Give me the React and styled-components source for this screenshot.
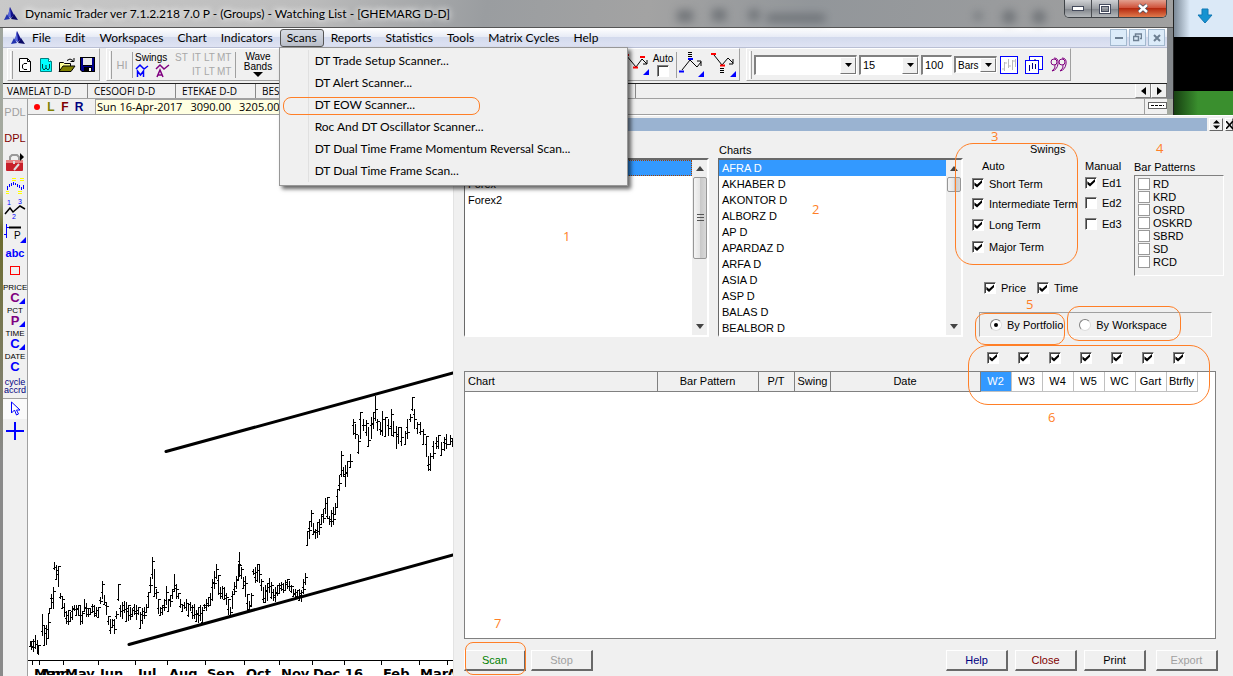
import React, { Component } from 'react';
import styled, { createGlobalStyle } from 'styled-components'

const ui = '"Open Sans", "Noto Sans", sans-serif'
const menuFont = 'Lato, "Open Sans", sans-serif'
const small = '"Liberation Sans", Arial, sans-serif'
const orange = '#ff7f27'

const menus = ['File', 'Edit', 'Workspaces', 'Chart', 'Indicators', 'Scans', 'Reports', 'Statistics', 'Tools', 'Matrix Cycles', 'Help']
const scanItems = [
    'DT Trade Setup Scanner...',
    'DT Alert Scanner...',
    'DT EOW Scanner...',
    'Roc And DT Oscillator Scanner...',
    'DT Dual Time Frame Momentum Reversal Scan...',
    'DT Dual Time Frame Scan...'
]
const symbols = ['AFRA D', 'AKHABER D', 'AKONTOR D', 'ALBORZ D', 'AP D', 'APARDAZ D', 'ARFA D', 'ASIA D', 'ASP D', 'BALAS D', 'BEALBOR D']
const patterns = ['RD', 'KRD', 'OSRD', 'OSKRD', 'SBRD', 'SD', 'RCD']
const waves = ['W2', 'W3', 'W4', 'W5', 'WC', 'Gart', 'Btrfly']
const columns = ['Chart', 'Bar Pattern', 'P/T', 'Swing', 'Date']

// x, high, low
const bars = [
    [30, 642, 647], [31, 642, 651], [33, 640, 653], [35, 636, 650], [37, 641, 655], [38, 646, 656], [42, 615, 637], [44, 626, 646], [46, 626, 646], [48, 614, 640], [49, 609, 615],
    [51, 595, 610], [53, 588, 610], [54, 563, 571], [56, 566, 580], [58, 567, 588], [60, 594, 600], [62, 598, 610], [64, 604, 618], [66, 612, 625],
    [68, 611, 626], [70, 613, 622], [72, 607, 621], [74, 606, 612], [76, 606, 617], [78, 606, 617], [80, 606, 626], [82, 612, 625], [84, 600, 612],
    [86, 604, 618], [88, 609, 618], [90, 610, 616], [92, 605, 614], [94, 606, 618], [96, 608, 618], [98, 608, 618], [100, 598, 605], [102, 582, 600],
    [104, 596, 606], [106, 603, 616], [108, 617, 626], [110, 620, 635], [112, 620, 628], [114, 620, 635], [116, 612, 620], [118, 585, 602],
    [120, 606, 618], [122, 603, 620], [124, 602, 614], [126, 603, 622], [128, 606, 622], [130, 608, 621], [132, 609, 618], [134, 605, 616],
    [136, 606, 621], [138, 608, 616], [140, 613, 629], [142, 609, 625], [144, 608, 620], [146, 605, 614], [148, 593, 608], [150, 578, 594],
    [152, 558, 580], [154, 570, 597], [156, 590, 600], [158, 600, 615], [160, 608, 617], [162, 606, 616], [164, 600, 612], [166, 587, 606],
    [168, 600, 612], [170, 596, 608], [172, 590, 600], [174, 575, 592], [176, 585, 600], [178, 594, 600], [180, 600, 609], [182, 605, 612],
    [184, 603, 610], [186, 600, 612], [188, 605, 618], [190, 603, 612], [192, 606, 620], [194, 605, 620], [196, 611, 622], [198, 608, 624],
    [200, 606, 622], [202, 608, 625], [204, 605, 610], [206, 600, 612], [208, 598, 608], [210, 594, 606], [212, 580, 602], [214, 572, 590],
    [216, 565, 580], [218, 576, 596], [220, 588, 600], [222, 587, 600], [224, 588, 600], [226, 594, 606], [228, 600, 616], [230, 608, 617],
    [232, 592, 610], [234, 583, 596], [236, 577, 590], [238, 565, 580], [239, 553, 578], [241, 568, 580], [243, 578, 590], [245, 577, 598],
    [247, 595, 612], [249, 602, 612], [251, 594, 606], [253, 570, 576], [255, 568, 584], [257, 565, 583], [259, 566, 584], [261, 580, 592],
    [263, 588, 604], [265, 586, 603], [267, 584, 602], [269, 579, 594], [271, 583, 600], [273, 590, 602], [275, 588, 603], [277, 586, 597],
    [279, 584, 594], [281, 583, 592], [283, 584, 594], [285, 581, 592], [287, 580, 590], [289, 582, 592], [291, 586, 594], [293, 590, 597],
    [295, 590, 600], [297, 591, 600], [299, 590, 602], [301, 591, 603], [303, 580, 595], [305, 574, 586],
    [307, 532, 546], [309, 522, 540], [311, 511, 528], [313, 524, 536], [315, 530, 540], [317, 523, 539], [319, 520, 536], [321, 515, 525],
    [323, 510, 524], [325, 499, 515], [327, 498, 520], [329, 517, 526], [331, 511, 528], [333, 508, 526], [335, 504, 515], [337, 490, 508],
    [339, 476, 492], [341, 452, 478], [343, 468, 478], [345, 466, 488], [347, 462, 478], [350, 455, 468], [353, 420, 436], [355, 425, 440],
    [358, 436, 455], [360, 413, 440], [363, 420, 432], [366, 421, 437], [368, 428, 447], [371, 418, 440], [373, 413, 430], [375, 397, 422],
    [377, 420, 432], [380, 423, 436], [382, 412, 437], [385, 418, 437], [388, 420, 437], [391, 410, 437], [393, 422, 438], [396, 427, 450],
    [398, 428, 445], [401, 428, 447], [405, 432, 445], [407, 420, 440], [410, 415, 423], [412, 398, 412], [414, 410, 430], [417, 423, 435],
    [420, 423, 436], [423, 430, 445], [426, 437, 458], [428, 457, 472], [430, 454, 472], [433, 442, 460], [436, 438, 450], [438, 436, 450],
    [441, 443, 456], [444, 438, 452], [446, 435, 450], [450, 436, 446], [452, 440, 448]
]
const months = [
    [34, 'Mar'], [41, 'Apr'], [65, 'May'], [100, 'Jun'], [138, 'Jul'], [169, 'Aug'], [207, 'Sep'], [246, 'Oct'],
    [281, 'Nov'], [313, 'Dec 16'], [383, 'Feb'], [420, 'Mar'], [447, 'Apr']
]
const ticks = [32, 39, 63, 98, 135, 167, 205, 244, 279, 312, 344, 381, 419, 447]

const barPath = bars.map(([x, hi, lo], i) => {
    const open = lo - ((i * 5) % 7) * (lo - hi) / 8
    const close = hi + ((i * 3) % 5) * (lo - hi) / 6
    return `M${x} ${hi}V${lo}M${x - 2} ${Math.round(open)}h2M${x} ${Math.round(close)}h2`
}).join('')

const PriceChart = () => (
    <ChartSvg width="425" height="560" viewBox="28 116 425 560" role="img" aria-label="GHEMARG D-D price chart">
        <path d={barPath} transform="translate(.5 0)" fill="none" stroke="#000" shapeRendering="crispEdges" />
        <path d="M166 452.500L453 374M129 645.500L453 556" fill="none" stroke="#000" strokeWidth="3" strokeLinecap="round" />
        <path d="M28 661.500H453" stroke="#000" />
        {ticks.map(x => <path key={x} d={`M${x}.5 662v4`} stroke="#000" />)}
        {months.map(([x, name]) => <text key={x} x={x} y="679">{name}</text>)}
    </ChartSvg>
)

const AppLogo = () => (
    <svg width="14" height="14" viewBox="0 0 14 14">
        <path d="M6 0L10 8L7 11L4 9Z" fill="#10108c" />
        <path d="M6 0L7 11L4 9Z" fill="#5a6ae0" />
        <path d="M3 7L6 12L0 13Z" fill="#2233b0" />
        <path d="M10 7L14 13L7 12Z" fill="#0a0a66" />
    </svg>
)

const Corner = ({ x, y }) => <path d={`M${x} ${y}v-6l-6 6z`} fill="#00f" />

class ToolBar extends Component {
    render() {
        return (
            <Tools>
                <Group>
                    <Grip />
                    <ToolButton aria-label="New chart">
                        <svg width="14" height="16" viewBox="0 0 14 16"><path d="M1.500 1.500h8l3 3v10h-11z" fill="#fff" stroke="#000" /><path d="M9.500 1.500v3h3M9 6.500h-3l-1.500 1.500v3l1.500 1.500h3" fill="none" stroke="#000" /></svg>
                    </ToolButton>
                    <ToolButton aria-label="New workspace">
                        <svg width="14" height="16" viewBox="0 0 14 16"><path d="M1.500 1.500h8l3 3v10h-11z" fill="#0ff" stroke="#008080" /><path d="M9.500 1.500v3h3" fill="#fff" stroke="#008080" /><path d="M3.500 7v4l1.500 2l2-2l2 2l1.500-2v-4M7 8v3" fill="none" stroke="#004040" /></svg>
                    </ToolButton>
                    <ToolButton aria-label="Open">
                        <svg width="18" height="16" viewBox="0 0 18 16"><path d="M1.500 14V5.500h4l1 1h6V9" fill="#ff9" stroke="#000" /><path d="M1 14.500L5 9h12l-4 5.500z" fill="#808000" stroke="#000" /><path d="M9 3.500q3-3 6 0M16 1v3.500h-3.500" fill="none" stroke="#000" /></svg>
                    </ToolButton>
                    <ToolButton aria-label="Save">
                        <svg width="15" height="15" viewBox="0 0 15 15"><path d="M0 0h15v15H2l-2-2z" fill="#000" /><path d="M1 1h2v8h9V1h2v13H2l-1-1z" fill="#00008b" /><path d="M3 1h9v7H3z" fill="#e8e8e8" /><path d="M4 10h8v5H4z" fill="#000" /><path d="M9 11h2v3H9z" fill="#fff" /></svg>
                    </ToolButton>
                </Group>
                <Group $wide>
                    <Grip />
                    <Hi>HI</Hi>
                    <Rule />
                    <Swings>
                        <span>Swings</span>
                        <svg width="36" height="15" viewBox="0 0 36 15" fill="none">
                            <path d="M1 6L5 2l4 4l4-3M2.500 14V8l3 4l3-4v6" stroke="#00f" strokeWidth="1.500" />
                            <path d="M21 6L25 2l4 4l5-4M22 14l3-7l3 7M23 12h4" stroke="#800080" strokeWidth="1.500" />
                        </svg>
                    </Swings>
                    <Terms>
                        <span>ST</span><span>IT</span><span>LT</span><span>MT</span>
                        <span /><span>IT</span><span>LT</span><span>MT</span>
                    </Terms>
                    <Rule />
                    <WaveBands><span>Wave</span><span>Bands</span><svg width="10" height="5"><path d="M0 0h10L5 5z" /></svg></WaveBands>
                    <Spacer />
                    <svg width="26" height="24" viewBox="0 0 26 24"><path d="M2 2L12 14L18 6L23 11M23 7v4h-4" fill="none" stroke="#000" /><path d="M0 2h5M9 14.500h5M16 4h5" stroke="red" strokeWidth="2" /><Corner x={25} y={22} /></svg>
                    <Auto>Auto<Check type="checkbox" /></Auto>
                    <Rule />
                    <svg width="26" height="28" viewBox="0 0 26 28"><path d="M3 19L11 9L18 16L22 11M22 15v-5h-4M9 1.500h4M9 3.500h4M9 5.500h4" fill="none" stroke="#000" /><path d="M0 20.500h5M9 8h5" stroke="#00f" strokeWidth="2" /><Corner x={25} y={26} /></svg>
                    <Gap />
                    <svg width="26" height="28" viewBox="0 0 26 28"><path d="M3 4L11 14L17 7L22 12M22 8v5h-4M9 17.500h4M9 19.500h4M9 21.500h4" fill="none" stroke="#000" /><path d="M0 3h5M9 14.500h5" stroke="red" strokeWidth="2" /><Corner x={25} y={26} /></svg>
                </Group>
                <Group>
                    <Grip />
                    <Combo $w={103}><select aria-label="Symbol"><option> </option></select><Drop /></Combo>
                    <Combo $w={60}><select aria-label="Interval"><option>15</option></select><Drop /></Combo>
                    <NumberBox aria-label="Number of bars" defaultValue="100" />
                    <Combo $w={43} $short><select aria-label="Units"><option>Bars</option></select><Drop /></Combo>
                    <ToolButton aria-label="Bars">
                        <svg width="18" height="18" viewBox="0 0 18 18"><rect x=".5" y=".5" width="17" height="17" fill="#fff" stroke="#00f" /><path d="M4.500 6v9M8.500 3v9M12.500 4v10M15.500 3v8M2 13h2M5 7h2M9 10h2M13 5h2" stroke="#bbb" /></svg>
                    </ToolButton>
                    <Gap />
                    <ToolButton aria-label="Cascade">
                        <svg width="18" height="18" viewBox="0 0 18 18"><rect x="4.500" y=".5" width="13" height="13" fill="#fff" stroke="#00f" /><rect x=".5" y="4.500" width="13" height="13" fill="#fff" stroke="#00f" /><path d="M4.500 9v6M7.500 7v6M10.500 8v5M10 3v2" stroke="#000080" /></svg>
                    </ToolButton>
                    <Gap />
                    <ToolButton aria-label="Quotes">
                        <svg width="17" height="16" viewBox="0 0 17 16" fill="none" stroke="#800080"><circle cx="4" cy="5" r="3" /><circle cx="12" cy="5" r="3" /><path d="M4 1q5 0 4 6q-1 6-6 7q4-3 3-6M12 1q5 0 4 6q-1 6-6 7q4-3 3-6" /></svg>
                    </ToolButton>
                </Group>
            </Tools>
        );
    }
}

const Drop = () => <Arrow aria-hidden="true"><svg width="7" height="4"><path d="M0 0h7L3.500 4z" /></svg></Arrow>

const Rail = () => (
    <RailBox>
        <RailItem $h={25} $color="#a0a0a0">PDL</RailItem>
        <RailItem $h={27} $color="#800000">DPL</RailItem>
        <RailItem $h={24} aria-label="Tool box">
            <svg width="22" height="20" viewBox="0 0 22 20"><path d="M6 7V4l2-2h5l2 2v3" fill="none" stroke="#999" strokeWidth="2" /><rect x="2" y="7" width="17" height="11" rx="1" fill="#c8202a" /><path d="M2 7h17v3H2z" fill="#e88080" /><path d="M10 8v3M15 11l-5 6" fill="none" stroke="#ddd" strokeWidth="2" /><path d="M16 0l4 4l-4 4z" /></svg>
        </RailItem>
        <RailItem $h={22} aria-label="Peaks">
            <svg width="20" height="18" viewBox="0 0 20 18"><path d="M7 1.500h4M7 3.500h4M15 1.500h4M15 3.500h4M1 14.500h3M1 16.500h3M13 14.500h4M13 16.500h4" stroke="#ff0" /><path d="M2.500 9v4M4.500 7v3M6.500 6v3M8.500 5v3M10.500 6v2M12.500 7v3M14.500 8v3M16.500 10v3M18.500 8v4" stroke="#00f" /></svg>
        </RailItem>
        <RailItem $h={25} aria-label="Wave count">
            <svg width="22" height="22" viewBox="0 0 22 22"><path d="M1 15L6 9L9 13L16 7L21 10" fill="none" stroke="#000" strokeWidth="1.500" /><g fill="#00f" fontSize="7" fontFamily="Liberation Sans"><text x="3" y="6">1</text><text x="14" y="5">3</text><text x="8" y="20">2</text></g></svg>
        </RailItem>
        <RailItem $h={24} aria-label="Price line">
            <svg width="22" height="20" viewBox="0 0 22 20"><path d="M2.500 0v14M0 10.500h2M2 3.500h3" stroke="#00f" /><path d="M5 3.500h12" stroke="#000" strokeWidth="2" /><text x="10" y="15" fontSize="10" fontFamily="Liberation Sans">P</text><Corner x={22} y={19} /></svg>
        </RailItem>
        <RailItem $h={13} $color="#00f" $bold>abc</RailItem>
        <RailItem $h={23} aria-label="Box"><svg width="10" height="9"><rect x=".5" y=".5" width="9" height="8" fill="none" stroke="red" /></svg></RailItem>
        {[['PRICE', 'C', '#800080', 1], ['PCT', 'P', '#800080', 1], ['TIME', 'C', '#00f', 1], ['DATE', 'C', '#00f', 0]].map(([name, sign, color, more]) => (
            <RailTool key={name} $color={color}>{name}<b>{sign}</b>{more ? <i /> : null}</RailTool>
        ))}
        <RailItem $h={24} $color="#000080" $tiny>cycle<br />accrd</RailItem>
        <RailItem $h={21} $on aria-label="Pointer"><svg width="12" height="16" viewBox="0 0 12 16"><path d="M2.500 1v11l3-3l2 5l2-1l-2-4h3.500z" fill="#fff" stroke="#00f" /></svg></RailItem>
        <RailItem $h={24} aria-label="Crosshair"><svg width="18" height="18"><path d="M9 0v18M0 9h18" stroke="#00f" strokeWidth="2" /></svg></RailItem>
    </RailBox>
)

const List = ({ name, label, items, thumb, focus }) => (
    <ListCol>
        <ListLabel>{label}</ListLabel>
        <ListBox>
            <ul role="listbox" aria-label={name}>
                {items.map((e, i) => <Row key={e} role="option" aria-selected={i === 0} $on={i === 0} $focus={focus && i === 0}>{e}</Row>)}
            </ul>
            <Scroll>
                <svg width="8" height="5"><path d="M0 5L4 0L8 5z" fill="#444" /></svg>
                <Thumb $h={thumb}>{thumb > 30 ? <svg width="8" height="10"><path d="M1 1.500h7M1 4.500h7M1 7.500h7" stroke="#555" /></svg> : null}</Thumb>
                <svg width="8" height="5"><path d="M0 0L4 5L8 0z" fill="#444" /></svg>
            </Scroll>
        </ListBox>
    </ListCol>
)

const Tick = ({ children, on, h }) => <TickLabel $h={h}><Check type="checkbox" defaultChecked={on} />{children}</TickLabel>

class ScanDialog extends Component {
    render() {
        return (
            <Dialog role="dialog" aria-label="DT EOW Scanner">
                <Caption>
                    <div />
                    <CaptionButton aria-label="Resize"><svg width="7" height="9"><path d="M0 3.500L3.500 0L7 3.500zM0 5.500L3.500 9L7 5.500z" /></svg></CaptionButton>
                    <CaptionButton aria-label="Close dialog"><svg width="7" height="8"><path d="M0 0l7 8M7 0L0 8" stroke="#000" strokeWidth="1.500" /></svg></CaptionButton>
                </Caption>
                <Upper>
                    <List name="Portfolios" items={['', 'Forex', 'Forex2']} thumb={82} focus />
                    <List name="Charts" label="Charts" items={symbols} thumb={15} />
                    <Options>
                        <SwingRow>
                            <SwingSet>
                                <SwingTitle>Swings</SwingTitle>
                                <SwingCols>
                                    <div>
                                        <Head>Auto</Head>
                                        <Tick on h={19}>Short Term</Tick>
                                        <Tick on h={21}>Intermediate Term</Tick>
                                        <Tick on h={22}>Long Term</Tick>
                                        <Tick on h={22}>Major Term</Tick>
                                    </div>
                                    <div>
                                        <Head $flush>Manual</Head>
                                        <Tick on h={19}>Ed1</Tick>
                                        <Tick h={21}>Ed2</Tick>
                                        <Tick h={22}>Ed3</Tick>
                                    </div>
                                </SwingCols>
                            </SwingSet>
                            <PatternCol>
                                <span>Bar Patterns</span>
                                <Patterns>
                                    {patterns.map(e => <label key={e}><input type="checkbox" />{e}</label>)}
                                </Patterns>
                            </PatternCol>
                        </SwingRow>
                        <PriceTime>
                            <Tick on h={16}>Price</Tick>
                            <Tick on h={16}>Time</Tick>
                        </PriceTime>
                        <Scope>
                            <label><Radio type="radio" name="scope" defaultChecked />By Portfolio</label>
                            <label><Radio type="radio" name="scope" />By Workspace</label>
                        </Scope>
                    </Options>
                </Upper>
                <WaveChecks>
                    {waves.map(e => <Check key={e} type="checkbox" aria-label={e} defaultChecked />)}
                </WaveChecks>
                <Results>
                    <table>
                        <colgroup>
                            <col width="192" /><col width="101" /><col width="36" /><col width="36" /><col width="150" />
                            {waves.map(e => <col key={e} width="31" />)}
                            <col />
                        </colgroup>
                        <thead>
                            <tr>
                                {columns.map(e => <Th key={e} $left={e === 'Chart'}>{e}</Th>)}
                                {waves.map(e => <WaveTh key={e} $on={e === 'W2'}>{e}</WaveTh>)}
                                <td />
                            </tr>
                        </thead>
                    </table>
                </Results>
                <Footer>
                    <Buttons $gap={5}>
                        <Push $color="#008000">Scan</Push>
                        <Push disabled>Stop</Push>
                    </Buttons>
                    <Spacer />
                    <Buttons $gap={7}>
                        <Push $color="#000080">Help</Push>
                        <Push $color="#800000">Close</Push>
                        <Push>Print</Push>
                    </Buttons>
                    <Push disabled>Export</Push>
                </Footer>
                <Ring $x={501} $y={27} $w={123} $h={122} $r={18} />
                <Ring $x={521} $y={197} $w={90} $h={32} $r={10} />
                <Ring $x={613} $y={190} $w={114} $h={35} $r={12} />
                <Ring $x={514} $y={229} $w={242} $h={60} $r={20} />
                <Ring $x={11} $y={526} $w={61} $h={33} $r={8} />
                <Mark $x={109} $y={111}>1</Mark>
                <Mark $x={358} $y={84}>2</Mark>
                <Mark $x={537} $y={11}>3</Mark>
                <Mark $x={702} $y={23}>4</Mark>
                <Mark $x={572} $y={179}>5</Mark>
                <Mark $x={594} $y={292}>6</Mark>
                <Mark $x={40} $y={498}>7</Mark>
            </Dialog>
        );
    }
}

class App extends Component {
    render() {
        return (
            <Screen>
                <Global />
                <Header>
                    <Title>
                        <AppLogo />
                        <span>Dynamic Trader ver 7.1.2.218 7.0 P - (Groups) - Watching List - [GHEMARG D-D]</span>
                        <Haze width="430" height="27" viewBox="660 0 430 27">
                            <g fill="#555a60"><rect x="678" y="10" width="16" height="12" /><rect x="713" y="9" width="14" height="12" /><circle cx="755" cy="15" r="6" /><rect x="768" y="14" width="58" height="8" /><circle cx="979" cy="16" r="4" /><circle cx="1010" cy="17" r="7" /><circle cx="1040" cy="17" r="7" /></g>
                        </Haze>
                        <Controls>
                            <button aria-label="Minimize"><svg width="12" height="5"><rect x=".5" y=".5" width="11" height="4" fill="#fff" stroke="#444a5c" /></svg></button>
                            <button aria-label="Maximize"><svg width="12" height="10"><rect x="1.500" y="1.500" width="9" height="7" fill="none" stroke="#444a5c" strokeWidth="3" /><rect x="1.500" y="1.500" width="9" height="7" fill="none" stroke="#fff" /></svg></button>
                            <CloseX aria-label="Close"><svg width="12" height="11"><path d="M2 2l8 7M10 2L2 9" stroke="#444a5c" strokeWidth="4" /><path d="M2 2l8 7M10 2L2 9" stroke="#fff" strokeWidth="2.500" /></svg></CloseX>
                        </Controls>
                    </Title>
                    <MenuBar>
                        <AppLogo />
                        {menus.map(e => e === 'Scans' ? (
                            <MenuHold key={e}>
                                <MenuButton $open aria-expanded="true">{e}</MenuButton>
                                <DropMenu role="menu">
                                    {scanItems.map(s => <button key={s} role="menuitem">{s}</button>)}
                                    <Ring $x={3} $y={49} $w={197} $h={18} $r={8} />
                                </DropMenu>
                            </MenuHold>
                        ) : <MenuButton key={e}>{e}</MenuButton>)}
                        <Spacer />
                        <ChildButtons>
                            <button aria-label="Minimize chart"><svg width="8" height="3"><path d="M0 1h8v2H0z" fill="#6d7f92" /></svg></button>
                            <button aria-label="Restore chart"><svg width="9" height="9" fill="none" stroke="#6d7f92"><path d="M2.500 3V1h6v4.500H7M.5 3.500h5v4h-5z" strokeWidth="1.500" /></svg></button>
                            <button aria-label="Close chart"><svg width="8" height="8"><path d="M1 1l6 6M7 1L1 7" stroke="#6d7f92" strokeWidth="2" /></svg></button>
                        </ChildButtons>
                    </MenuBar>
                    <ToolBar />
                    <Tabs>
                        <Tab $w={85}>VAMELAT D-D</Tab>
                        <Tab $w={88}>CESOOFI D-D</Tab>
                        <Tab $w={80}>ETEKAE D-D</Tab>
                        <Tab $w={380}>BES</Tab>
                        <Spacer />
                        <TabArrow aria-label="Previous"><svg width="5" height="8"><path d="M5 0v8L0 4z" /></svg></TabArrow>
                        <TabArrow aria-label="Next"><svg width="5" height="8"><path d="M0 0v8l5-4z" /></svg></TabArrow>
                    </Tabs>
                </Header>
                <Rail />
                <Info>
                    <Dot />
                    <Letter $color="#808000">L</Letter>
                    <Letter $color="#800000">F</Letter>
                    <Letter $color="#000080">R</Letter>
                    <Quote><span>Sun 16-Apr-2017</span><span>3090.00</span><span>3205.00</span></Quote>
                    <Spacer />
                    <Dashes><svg width="19" height="7"><rect x=".5" y=".5" width="18" height="6" fill="#fff" stroke="#666" /><path d="M3 3.500h13" stroke="#000" strokeDasharray="3 1" /></svg></Dashes>
                </Info>
                <Side>
                    <Sky><svg width="16" height="16" viewBox="0 0 16 16"><path d="M5 1h6v6h4L8 15L1 7h4z" fill="#1793d1" stroke="#1178b5" /></svg></Sky>
                    <Dark />
                    <Grass />
                </Side>
                <Work>
                    <ChartPane><PriceChart /></ChartPane>
                    <ScanDialog />
                </Work>
            </Screen>
        );
    }
}

export default App;

const Global = createGlobalStyle`
*{
    box-sizing:border-box;
}
body{
    margin:0;
    overflow:hidden;
    font:11px ${small};
    color:#000;
}
button,input,select{
    font:inherit;
    color:inherit;
    margin:0;
    padding:0;
    border:0;
    background:none;
}
svg{
    display:block;
    flex:none;
}
`
const Screen = styled.div`
height:100vh;
padding-left:3px;
display:grid;
grid-template-columns:25px 1fr 60px;
grid-template-rows:99px 16px 1fr;
background:linear-gradient(#9da39d 0,#a8ada0 190px,#6b6b2c 230px,#8a8a8a 460px);
overflow:hidden;
`
const Header = styled.header`
grid-column:1 / 3;
position:relative;
z-index:2;
display:flex;
flex-direction:column;
background:#f0f0f0;
border-right:6px solid #83878b;
`
const Title = styled.div`
height:28px;
margin:0 -6px 0 -3px;
padding:0 6px 0 4px;
display:flex;
align-items:center;
gap:7px;
background:linear-gradient(100deg,#c9c9c9,#bcbcbc 300px,#9a9da0 480px,#a3a3a3 640px,#92969a 800px,#a0a0a0);
border-bottom:1px solid #555;
font:12px ${menuFont};
white-space:nowrap;
>span{
    text-shadow:0 0 6px #fff,0 0 8px #fff;
}
`
const Haze = styled.svg`
margin-left:auto;
margin-right:-32px;
filter:blur(4px);
opacity:.6;
`
const Controls = styled.div`
align-self:flex-start;
display:flex;
height:18px;
border:1px solid #3f4347;
border-top:0;
border-radius:0 0 5px 5px;
overflow:hidden;
position:relative;
button{
    width:27px;
    display:flex;
    align-items:center;
    justify-content:center;
    background:linear-gradient(#cfd1d4,#9a9da2 50%,#7f8389 51%,#b5b8bb);
    border-right:1px solid #4a4d52;
}
`
const CloseX = styled.button`
&&{
    width:47px;
    border:0;
    background:linear-gradient(#e2a08f,#d0533b 45%,#b52a10 50%,#e07a4d);
}
`
const MenuBar = styled.nav`
height:20px;
padding:0 2px 0 8px;
display:flex;
align-items:center;
background:linear-gradient(#fff,#e8ecf6 45%,#d3daed 50%,#dfe3f3);
border-bottom:1px solid #b9bfd4;
font:12px ${menuFont};
`
const MenuButton = styled.button`
height:18px;
padding:0 6px;
line-height:16px;
border:1px solid ${p => p.$open ? '#555' : 'transparent'};
border-radius:3px;
background:${p => p.$open ? 'linear-gradient(#d8dce4,#b9bec9)' : 'none'};
white-space:nowrap;
`
const MenuHold = styled.div`
position:relative;
`
const DropMenu = styled.div`
position:absolute;
left:-1px;
top:18px;
width:349px;
padding:2px 2px 3px;
display:flex;
flex-direction:column;
background:#f0f0f0;
border:1px solid #979797;
box-shadow:3px 3px 4px rgba(0,0,0,.6);
button{
    height:22px;
    margin-left:26px;
    padding-left:6px;
    border-left:1px solid #e0e0e0;
    text-align:left;
}
`
const ChildButtons = styled.div`
display:flex;
gap:2px;
button{
    width:17px;
    height:17px;
    display:flex;
    align-items:center;
    justify-content:center;
    background:#dcebf9;
    border:1px solid #a3b9cf;
}
`
const Tools = styled.div`
height:36px;
padding:0 0 2px 4px;
display:flex;
gap:6px;
border-bottom:1px solid #222;
`
const Group = styled.div`
flex:none;
width:${p => p.$wide ? '634px' : 'auto'};
padding:0 2px;
display:flex;
align-items:center;
gap:2px;
border:1px solid #fff;
border-right-color:#a0a0a0;
border-bottom-color:#a0a0a0;
`
const Grip = styled.div`
width:3px;
height:28px;
border-left:1px solid #fff;
border-right:1px solid #a0a0a0;
`
const ToolButton = styled.button`
min-width:19px;
height:22px;
display:flex;
align-items:center;
justify-content:center;
`
const Hi = styled.span`
width:16px;
color:#a8a8a8;
text-align:center;
`
const Rule = styled.div`
width:1px;
height:26px;
background:#a0a0a0;
`
const Swings = styled.div`
width:38px;
display:flex;
flex-direction:column;
font-size:10px;
line-height:11px;
`
const Terms = styled.div`
width:58px;
display:grid;
grid-template-columns:17px 12px 13px 16px;
font-size:10px;
line-height:14px;
color:#a8a8a8;
`
const WaveBands = styled.div`
width:40px;
display:flex;
flex-direction:column;
align-items:center;
font-size:10px;
line-height:10px;
`
const Spacer = styled.div`
flex:1;
`
const Gap = styled.div`
width:2px;
`
const Auto = styled.label`
width:22px;
display:flex;
flex-direction:column;
align-items:center;
gap:1px;
font-size:10px;
line-height:11px;
`
const Combo = styled.div`
position:relative;
width:${p => p.$w}px;
height:${p => p.$short ? '17px' : '20px'};
border:2px solid #808080;
border-right:1px solid #fff;
border-bottom:1px solid #fff;
background:#fff;
select{
    appearance:none;
    width:100%;
    height:100%;
    padding-left:2px;
    font-size:${p => p.$short ? '10px' : '11px'};
}
`
const Arrow = styled.span`
position:absolute;
right:0;
top:0;
bottom:0;
width:16px;
display:flex;
align-items:center;
justify-content:center;
background:#f0f0f0;
border:1px solid #fff;
border-right-color:#777;
border-bottom-color:#777;
pointer-events:none;
`
const NumberBox = styled.input`
&&{
    width:31px;
    height:20px;
    padding-left:2px;
    border:2px solid #808080;
    border-right:1px solid #fff;
    border-bottom:1px solid #fff;
    background:#fff;
}
`
const Tabs = styled.div`
height:15px;
display:flex;
font:10px ${ui};
line-height:14px;
border-bottom:1px solid #a0a0a0;
`
const Tab = styled.div`
width:${p => p.$w}px;
padding-left:${p => p.$w === 85 ? '4px' : '6px'};
border-right:1px solid #888;
`
const TabArrow = styled.button`
width:16px;
display:flex;
align-items:center;
justify-content:center;
border-left:1px solid #fff;
border-right:1px solid #808080;
border-bottom:1px solid #808080;
`
const RailBox = styled.div`
grid-row:2 / 4;
display:flex;
flex-direction:column;
background:#f0f0f0;
border-right:1px solid #a0a0a0;
`
const RailItem = styled.button`
height:${p => p.$h}px;
flex:none;
display:flex;
align-items:center;
justify-content:center;
color:${p => p.$color || '#000'};
font-size:${p => p.$tiny ? '9px' : '11px'};
line-height:8px;
font-weight:${p => p.$bold ? 'bold' : 'normal'};
background:${p => p.$on ? '#fafafa' : 'none'};
border-top:${p => p.$on ? '1px solid #a0a0a0' : '0'};
`
const RailTool = styled.button`
position:relative;
height:23px;
flex:none;
font:8px "Liberation Sans Narrow", ${small};
line-height:9px;
b{
    display:block;
    font:bold 13px ${small};
    line-height:12px;
    color:${p => p.$color};
}
i{
    position:absolute;
    right:2px;
    bottom:1px;
    border-left:6px solid transparent;
    border-bottom:6px solid #00f;
}
`
const Info = styled.div`
padding-left:6px;
margin-right:6px;
display:flex;
align-items:center;
background:#f0f0f0;
border-bottom:1px solid #a0a0a0;
`
const Dot = styled.i`
width:6px;
height:6px;
margin-right:4px;
border-radius:3px;
background:red;
`
const Letter = styled.b`
width:14px;
font:bold 12px ${small};
color:${p => p.$color};
text-align:center;
`
const Quote = styled.div`
align-self:stretch;
width:340px;
margin-left:9px;
padding-left:1px;
display:flex;
gap:8px;
background:#ffffe1;
border:1px solid #a0a0a0;
border-right:0;
border-bottom:0;
font:11px ${ui};
line-height:14px;
white-space:nowrap;
`
const Dashes = styled.div`
align-self:stretch;
padding:3px 0 0 3px;
border-left:1px solid #a0a0a0;
`
const Side = styled.aside`
grid-column:3;
grid-row:1 / 3;
display:flex;
flex-direction:column;
border-left:1px solid #222;
`
const Sky = styled.div`
height:37px;
padding:8px 0 0 23px;
background:linear-gradient(90deg,#7c8a98,#dbe9f7 16px);
`
const Dark = styled.div`
height:54px;
background:#000;
`
const Grass = styled.div`
flex:1;
background:linear-gradient(90deg,#174011,#3a8f2e 24px);
`
const Work = styled.main`
grid-column:2 / 4;
min-width:0;
display:flex;
background:#f0f0f0;
`
const ChartPane = styled.section`
flex:none;
width:425px;
background:#fff;
overflow:hidden;
`
const ChartSvg = styled.svg`
text{
    font:bold 13px "DejaVu Sans", ${ui};
}
`
const Dialog = styled.section`
flex:1;
min-width:0;
position:relative;
display:flex;
flex-direction:column;
padding-left:10px;
background:#f0f0f0;
border-left:1px solid #e3e3e3;
border-top:1px solid #fff;
`
const Caption = styled.div`
height:15px;
margin-left:-10px;
padding-top:2px;
display:flex;
gap:2px;
>div{
    flex:1;
    background:#9ab3d1;
}
`
const CaptionButton = styled.button`
width:14px;
display:flex;
align-items:center;
justify-content:center;
border:1px solid #fff;
border-right-color:#666;
border-bottom-color:#666;
&:last-child{
    width:8px;
}
`
const Upper = styled.div`
height:213px;
padding-top:11px;
display:flex;
gap:9px;
`
const ListCol = styled.div`
width:245px;
flex:none;
line-height:16px;
`
const ListLabel = styled.div`
height:16px;
padding-left:1px;
`
const ListBox = styled.div`
height:179px;
display:flex;
background:#fff;
border:2px solid #696969;
border-left-width:1px;
border-right-color:#fff;
border-bottom-color:#fff;
ul{
    flex:1;
    margin:0;
    padding:0;
    list-style:none;
    overflow:hidden;
}
`
const Row = styled.li`
height:16px;
padding-left:3px;
color:${p => p.$on ? '#fff' : '#000'};
background:${p => p.$on ? '#3399ff' : 'none'};
outline:${p => p.$focus ? '1px dotted #a04000' : '0'};
outline-offset:-1px;
`
const Scroll = styled.div`
width:15px;
padding:6px 0;
display:flex;
flex-direction:column;
align-items:center;
gap:6px;
background:#efefef;
>svg:last-child{
    margin-top:auto;
}
`
const Thumb = styled.div`
width:14px;
height:${p => p.$h}px;
display:flex;
align-items:center;
justify-content:center;
background:linear-gradient(90deg,#f4f4f4,#e4e4e4 50%,#c8c8c8 51%,#d8d8d8);
border:1px solid #979797;
border-radius:2px;
`
const Options = styled.div`
flex:1;
min-width:0;
`
const SwingRow = styled.div`
height:136px;
display:flex;
`
const SwingSet = styled.div`
width:162px;
`
const SwingTitle = styled.div`
padding-left:58px;
line-height:14px;
`
const SwingCols = styled.div`
display:grid;
grid-template-columns:102px auto;
gap:11px;
`
const Head = styled.div`
padding-top:2px;
padding-left:${p => p.$flush ? '0' : '10px'};
line-height:16px;
margin-bottom:${p => p.$flush ? '-1px' : '0'};
`
const TickLabel = styled.label`
height:${p => p.$h}px;
display:flex;
align-items:center;
gap:5px;
white-space:nowrap;
`
const Check = styled.input`
&&{
    appearance:none;
    flex:none;
    width:12px;
    height:12px;
    display:grid;
    place-items:center;
    background:#fff;
    border:1px solid #fff;
    border-top-color:#808080;
    border-left-color:#808080;
    box-shadow:inset 1px 1px #404040;
}
&:checked::before{
    content:'';
    width:8px;
    height:8px;
    background:#000;
    clip-path:polygon(5% 35%,38% 62%,100% 5%,100% 42%,38% 100%,5% 72%);
}
`
const PatternCol = styled.div`
width:90px;
padding-top:17px;
line-height:16px;
`
const Patterns = styled.div`
height:101px;
padding:1px;
border:1px solid #808080;
border-right-color:#fff;
border-bottom-color:#fff;
label{
    height:13px;
    padding-left:2px;
    display:flex;
    align-items:center;
    gap:3px;
}
input{
    appearance:none;
    width:12px;
    height:12px;
    background:#fff;
    border:1px solid #999;
}
`
const PriceTime = styled.div`
padding:2px 0 0 12px;
display:flex;
gap:11px;
`
const Scope = styled.div`
width:233px;
height:25px;
margin:16px 0 0 7px;
padding-left:10px;
display:flex;
gap:16px;
border:1px solid #a0a0a0;
border-right-color:#fff;
border-bottom-color:#fff;
label{
    display:flex;
    align-items:center;
    gap:5px;
}
`
const Radio = styled.input`
&&{
    appearance:none;
    width:12px;
    height:12px;
    display:grid;
    place-items:center;
    border:1px solid #808080;
    border-right-color:#ddd;
    border-bottom-color:#ddd;
    border-radius:6px;
    background:#fff;
}
&:checked::before{
    content:'';
    width:4px;
    height:4px;
    border-radius:2px;
    background:#000;
}
`
const WaveChecks = styled.div`
height:27px;
padding-left:523px;
display:flex;
align-items:center;
gap:19px;
`
const Results = styled.div`
flex:1;
margin-right:17px;
background:#fff;
border:1px solid #808080;
table{
    width:100%;
    table-layout:fixed;
    border-collapse:collapse;
}
`
const Th = styled.th`
height:19px;
padding:0 3px;
font-weight:normal;
text-align:${p => p.$left ? 'left' : 'center'};
background:#f0f0f0;
border-right:1px solid #808080;
border-bottom:1px solid #808080;
`
const WaveTh = styled.th`
padding:0;
font-weight:normal;
color:${p => p.$on ? '#fff' : '#000'};
background:${p => p.$on ? '#3399ff' : '#fff'};
border-right:1px solid #c0c0c0;
border-bottom:1px solid #c0c0c0;
`
const Footer = styled.div`
height:37px;
padding:11px 15px 5px 0;
display:flex;
gap:10px;
`
const Buttons = styled.div`
display:flex;
gap:${p => p.$gap}px;
`
const Push = styled.button`
width:62px;
height:21px;
color:${p => p.$color || '#000'};
&&{
    background:#f0f0f0;
    border:1px solid #fff;
    border-right:2px solid #696969;
    border-bottom:2px solid #696969;
}
&:disabled{
    color:#a0a0a0;
}
`
const Ring = styled.div`
position:absolute;
left:${p => p.$x}px;
top:${p => p.$y}px;
width:${p => p.$w}px;
height:${p => p.$h}px;
border:1px solid ${orange};
border-radius:${p => p.$r}px;
pointer-events:none;
`
const Mark = styled.span`
position:absolute;
left:${p => p.$x}px;
top:${p => p.$y}px;
font:13px ${ui};
line-height:18px;
color:${orange};
`
